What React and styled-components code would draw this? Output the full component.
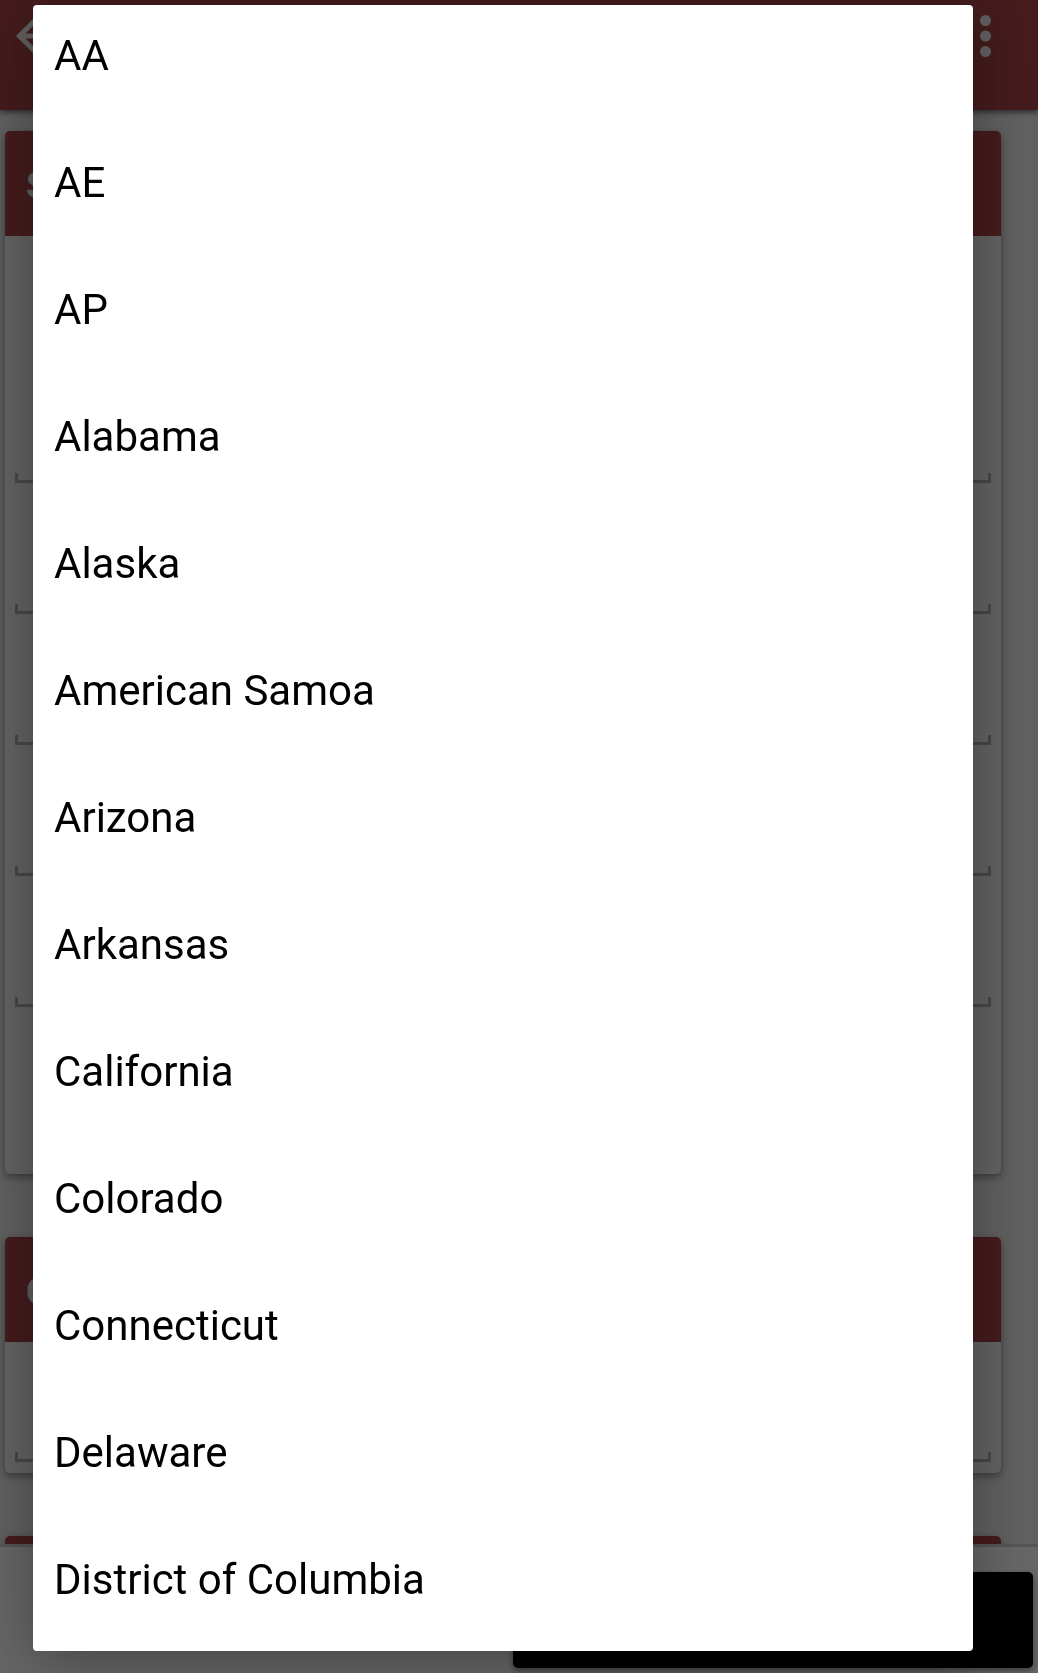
import React from "react";
import styled, { createGlobalStyle } from "styled-components";

const GlobalStyle = createGlobalStyle`
  *, *::before, *::after { box-sizing: border-box; }
  body {
    margin: 0;
    font-family: Roboto, "Liberation Sans", sans-serif;
    background: #f0f0f0;
  }
`;

const Screen = styled.div`
  display: flex;
  flex-direction: column;
  height: 100vh;
  overflow: hidden;
`;

const AppBar = styled.header`
  display: flex;
  flex: none;
  justify-content: space-between;
  align-items: flex-start;
  height: 110px;
  padding: 12px 44px 0 16px;
  background: #ac4548;
  box-shadow: 0 2px 6px rgba(0, 0, 0, 0.6);
  z-index: 1;
`;

const IconButton = styled.button`
  display: flex;
  align-items: center;
  height: 48px;
  padding: 0;
  border: 0;
  background: none;
  color: #f0f0f0;
`;

const Content = styled.main`
  display: flex;
  flex: 1;
  flex-direction: column;
  gap: 63px;
  min-height: 0;
  padding: 21px 37px 0 5px;
  overflow: hidden;
`;

const Card = styled.section`
  flex: none;
  border-radius: 5px;
  background: #f6f6f6;
  box-shadow: 0 3px 8px rgba(0, 0, 0, 0.4);
`;

const CardTitle = styled.h2`
  height: 105px;
  margin: 0;
  padding-left: 21px;
  border-radius: 5px 5px 0 0;
  background: #ac4548;
  color: #f0f0f0;
  font-size: 36px;
  font-weight: 700;
  line-height: 110px;
`;

const Fields = styled.form`
  display: flex;
  flex-direction: column;
  gap: ${(p) => (p.$compact ? "0" : "31px")};
  padding: ${(p) => (p.$compact ? "20px 10px 11px" : "147px 10px 167px")};
`;

const Field = styled.input`
  width: 100%;
  height: 100px;
  padding: 0 16px;
  border: 0;
  border-radius: 0;
  font: 36px Roboto, sans-serif;
  background:
    linear-gradient(#b2b2b2, #b2b2b2) left bottom / 3px 10px no-repeat,
    linear-gradient(#b2b2b2, #b2b2b2) right bottom / 3px 10px no-repeat,
    linear-gradient(#b2b2b2, #b2b2b2) left bottom / 100% 3px no-repeat;
`;

const ActionBar = styled.footer`
  display: flex;
  flex: none;
  justify-content: flex-end;
  height: 129px;
  padding: 25px 5px 5px;
  border-top: 3px solid #d4d4d4;
  background: #ffffff;
`;

const PrimaryButton = styled.button`
  width: 520px;
  height: 96px;
  border: 0;
  border-radius: 5px;
  background: #000000;
  color: #000000;
  box-shadow: 0 3px 6px rgba(0, 0, 0, 0.4);
`;

const Backdrop = styled.div`
  position: fixed;
  inset: 0;
  z-index: 2;
  padding: 5px 65px 22px 33px;
  background: rgba(0, 0, 0, 0.6);
`;

const OptionList = styled.div`
  display: flex;
  flex-direction: column;
  gap: 25px;
  padding-bottom: 20px;
  border-radius: 4px;
  background: #ffffff;
  box-shadow: 0 10px 60px rgba(0, 0, 0, 0.35);
`;

const Option = styled.button`
  height: 102px;
  padding: 0 21px;
  border: 0;
  background: none;
  color: #000000;
  font: 400 42px/102px Roboto, "Liberation Sans", sans-serif;
  text-align: left;
`;

const regions = [
  "AA",
  "AE",
  "AP",
  "Alabama",
  "Alaska",
  "American Samoa",
  "Arizona",
  "Arkansas",
  "California",
  "Colorado",
  "Connecticut",
  "Delaware",
  "District of Columbia",
];

const addressFields = ["Name", "Street", "Unit", "City", "Zip"];

function BackIcon() {
  return (
    <svg width="40" height="40" viewBox="0 0 40 40" fill="none" stroke="currentColor" strokeWidth="5">
      <path d="M20 3.5 3.5 20 20 36.5M4 20h34" />
    </svg>
  );
}

function MoreIcon() {
  return (
    <svg width="17" height="46" viewBox="0 0 17 46" fill="currentColor">
      <circle cx="8.5" cy="7.5" r="5.5" />
      <circle cx="8.5" cy="23" r="5.5" />
      <circle cx="8.5" cy="38.5" r="5.5" />
    </svg>
  );
}

export default function App() {
  return (
    <>
      <GlobalStyle />
      <Screen>
        <AppBar>
          <IconButton aria-label="Back">
            <BackIcon />
          </IconButton>
          <IconButton aria-label="More">
            <MoreIcon />
          </IconButton>
        </AppBar>
        <Content>
          <Card>
            <CardTitle>S</CardTitle>
            <Fields>
              {addressFields.map((name) => (
                <Field key={name} aria-label={name} />
              ))}
            </Fields>
          </Card>
          <Card>
            <CardTitle>C</CardTitle>
            <Fields $compact>
              <Field aria-label="Contact" />
            </Fields>
          </Card>
          <Card>
            <CardTitle />
          </Card>
        </Content>
        <ActionBar>
          <PrimaryButton aria-label="Continue" />
        </ActionBar>
      </Screen>
      <Backdrop>
        <OptionList role="listbox" aria-label="State">
          {regions.map((name) => (
            <Option key={name} role="option">
              {name}
            </Option>
          ))}
        </OptionList>
      </Backdrop>
    </>
  );
}
